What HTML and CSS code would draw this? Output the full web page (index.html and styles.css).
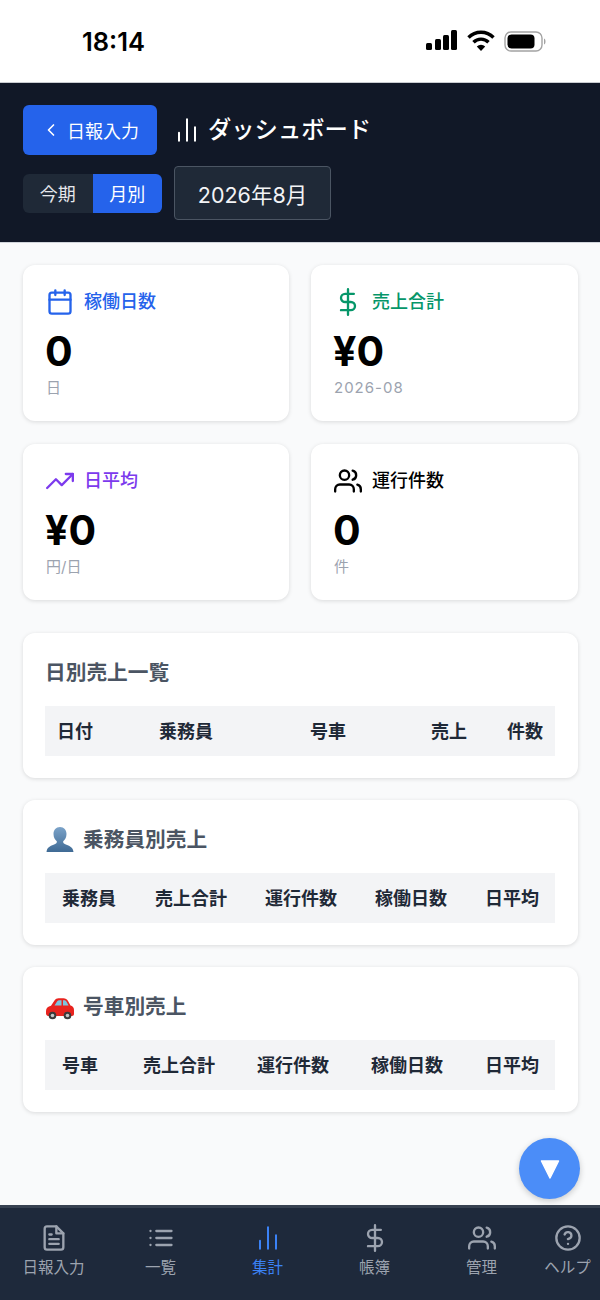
FILE: index.html
```html
<!DOCTYPE html>
<html lang="ja">
<head>
  <meta charset="UTF-8">
  <title>ダッシュボード</title>
  <link rel="stylesheet" href="styles.css">
</head>
<body>
  <div class="status-bar">
    <span class="clock">18:14</span>
    <div class="status-icons">
      <svg width="32" height="22" viewBox="0 0 32 22"><rect x="0" y="13" width="6" height="7" rx="1.5"/><rect x="9" y="9" width="6" height="11" rx="1.5"/><rect x="17" y="5" width="6" height="15" rx="1.5"/><rect x="25" y="0" width="6" height="20" rx="1.5"/></svg>
      <svg width="28" height="22" viewBox="0 0 28 22" fill="none" stroke="#000" stroke-width="3.4"><path d="M1.500 7.500a17.500 17.500 0 0 1 25 0"/><path d="M6.500 12.300a10.500 10.500 0 0 1 15 0"/><path d="M14 21l-4.200-4.600a6 6 0 0 1 8.400 0z" fill="#000" stroke="none"/></svg>
      <svg width="44" height="22" viewBox="0 0 44 22"><rect x="1" y="2" width="37" height="19" rx="6" fill="none" stroke="#a3a3a3" stroke-width="1.4"/><rect x="3.500" y="4.500" width="27" height="14" rx="4"/><path d="M40 8.500c2 .5 2 5.500 0 6z" fill="#a3a3a3"/></svg>
    </div>
  </div>

  <header class="top">
    <div class="top-row">
      <button class="back-btn">
        <svg class="ico" width="20" height="20" viewBox="0 0 24 24"><path d="M15 18l-6-6 6-6"/></svg>
        日報入力
      </button>
      <h1 class="page-title">
        <svg class="ico bars" width="32" height="32" viewBox="0 0 24 24"><path d="M18 20V10M12 20V4M6 20v-6"/></svg>
        ダッシュボード
      </h1>
    </div>
    <div class="filter-row">
      <div class="toggle">
        <span class="toggle-item">今期</span>
        <span class="toggle-item active">月別</span>
      </div>
      <div class="month-box">2026年8月</div>
    </div>
  </header>

  <main class="content">
    <section class="stats">
      <div class="stat">
        <div class="stat-head blue">
          <svg class="ico" width="28" height="28" viewBox="0 0 24 24"><rect x="3" y="4" width="18" height="18" rx="2"/><path d="M16 2v4M8 2v4M3 10h18"/></svg>
          稼働日数
        </div>
        <div class="stat-value">0</div>
        <div class="stat-sub">日</div>
      </div>
      <div class="stat">
        <div class="stat-head green">
          <svg class="ico" width="28" height="28" viewBox="0 0 24 24"><path d="M12 1v22M17 5H9.500a3.500 3.500 0 0 0 0 7h5a3.500 3.500 0 0 1 0 7H6"/></svg>
          売上合計
        </div>
        <div class="stat-value">¥0</div>
        <div class="stat-sub date-sub">2026-08</div>
      </div>
      <div class="stat">
        <div class="stat-head purple">
          <svg class="ico" width="28" height="28" viewBox="0 0 24 24"><path d="M23 6l-9.500 9.500-5-5L1 18"/><path d="M17 6h6v6"/></svg>
          日平均
        </div>
        <div class="stat-value">¥0</div>
        <div class="stat-sub">円/日</div>
      </div>
      <div class="stat">
        <div class="stat-head">
          <svg class="ico" width="28" height="28" viewBox="0 0 24 24"><path d="M17 21v-2a4 4 0 0 0-4-4H5a4 4 0 0 0-4 4v2"/><circle cx="9" cy="7" r="4"/><path d="M23 21v-2a4 4 0 0 0-3-3.870M16 3.130a4 4 0 0 1 0 7.750"/></svg>
          運行件数
        </div>
        <div class="stat-value">0</div>
        <div class="stat-sub">件</div>
      </div>
    </section>

    <section class="panel">
      <h2 class="panel-title">日別売上一覧</h2>
      <table class="daily">
        <colgroup><col class="w102"><col class="w151"><col class="w100"><col class="w81"><col class="w76"></colgroup>
        <tr><th>日付</th><th>乗務員</th><th>号車</th><th class="right">売上</th><th class="right">件数</th></tr>
      </table>
    </section>

    <section class="panel">
      <h2 class="panel-title">
        <svg width="30" height="30" viewBox="0 0 30 30">
          <defs><linearGradient id="bust" x1="0" y1="0" x2="0" y2="1"><stop offset="0" stop-color="#7ba3c9"/><stop offset="1" stop-color="#3f6a94"/></linearGradient></defs>
          <path fill="url(#bust)" d="M15 2c4 0 6.500 3 6.500 7 0 3.500-1.700 6-3.300 7.300-.4 1.700.6 2.500 3.300 3.500 3.500 1.300 6.500 2.700 7 7.200H1.500c.5-4.500 3.500-5.900 7-7.200 2.700-1 3.700-1.800 3.300-3.500C10.200 15 8.500 12.500 8.500 9c0-4 2.500-7 6.500-7z"/>
        </svg>
        乗務員別売上
      </h2>
      <table class="summary">
        <colgroup><col class="w93"><col class="w110"><col class="w110"><col class="w110"><col class="w87"></colgroup>
        <tr><th>乗務員</th><th>売上合計</th><th>運行件数</th><th>稼働日数</th><th>日平均</th></tr>
      </table>
    </section>

    <section class="panel">
      <h2 class="panel-title">
        <svg width="30" height="30" viewBox="0 0 30 30">
          <path fill="#e8231e" d="M1 19c0-3 2-4.500 5-5.200l3.500-5.300C10.500 7 12 6.300 13.500 6.300h5c2 0 3.500.9 4.400 2.400l2.600 4.800c2 .6 3.500 2 3.500 4.500v4c0 1.200-.8 2-2 2H2.800C1.700 23.500 1 22.800 1 21.500z"/>
          <path fill="#7cc4de" d="M9.500 13.500l2.700-4.300c.5-.7 1.200-1 2-1H16.500v5.300zM18 8.200h.8c1.200 0 2 .5 2.600 1.400l2.200 3.900H18z"/>
          <circle cx="7.500" cy="23.500" r="3.800" fill="#3a3a3a"/><circle cx="7.500" cy="23.500" r="1.800" fill="#c4c4c4"/>
          <circle cx="22.500" cy="23.500" r="3.800" fill="#3a3a3a"/><circle cx="22.500" cy="23.500" r="1.800" fill="#c4c4c4"/>
        </svg>
        号車別売上
      </h2>
      <table class="summary">
        <colgroup><col class="w81"><col class="w114"><col class="w114"><col class="w114"><col class="w87"></colgroup>
        <tr><th>号車</th><th>売上合計</th><th>運行件数</th><th>稼働日数</th><th>日平均</th></tr>
      </table>
    </section>
  </main>

  <button class="fab"><svg width="22" height="22" viewBox="0 0 22 22"><path d="M2.500 3h17L11 20z" fill="#fff" stroke="#fff" stroke-width="1.500" stroke-linejoin="round"/></svg></button>

  <nav class="bottom-nav">
    <a class="nav-item">
      <svg class="ico" width="28" height="28" viewBox="0 0 24 24"><path d="M14 2H6a2 2 0 0 0-2 2v16a2 2 0 0 0 2 2h12a2 2 0 0 0 2-2V8z"/><path d="M14 2v6h6M16 13H8M16 17H8M10 9H8"/></svg>
      日報入力
    </a>
    <a class="nav-item">
      <svg class="ico" width="28" height="28" viewBox="0 0 24 24"><path d="M8 6h13M8 12h13M8 18h13M3 6h.01M3 12h.01M3 18h.01"/></svg>
      一覧
    </a>
    <a class="nav-item active">
      <svg class="ico bars" width="32" height="32" viewBox="0 0 24 24"><path d="M18 20V10M12 20V4M6 20v-6"/></svg>
      集計
    </a>
    <a class="nav-item">
      <svg class="ico" width="28" height="28" viewBox="0 0 24 24"><path d="M12 1v22M17 5H9.500a3.500 3.500 0 0 0 0 7h5a3.500 3.500 0 0 1 0 7H6"/></svg>
      帳簿
    </a>
    <a class="nav-item">
      <svg class="ico" width="28" height="28" viewBox="0 0 24 24"><path d="M17 21v-2a4 4 0 0 0-4-4H5a4 4 0 0 0-4 4v2"/><circle cx="9" cy="7" r="4"/><path d="M23 21v-2a4 4 0 0 0-3-3.870M16 3.130a4 4 0 0 1 0 7.750"/></svg>
      管理
    </a>
    <a class="nav-item">
      <svg class="ico" width="28" height="28" viewBox="0 0 24 24"><circle cx="12" cy="12" r="10"/><path d="M9.090 9a3 3 0 0 1 5.830 1c0 2-3 3-3 3M12 17h.01"/></svg>
      ヘルプ
    </a>
  </nav>
</body>
</html>
```

FILE: styles.css
```css
* { box-sizing: border-box; }
html, body { margin: 0; height: 1300px; }
body { position: relative; display: flex; flex-direction: column; overflow: hidden; background: #f9fafb; color: #000; font-family: Inter, "Noto Sans CJK JP", sans-serif; }
.ico { fill: none; stroke: currentColor; stroke-width: 2; stroke-linecap: round; stroke-linejoin: round; flex: none; }
.ico.bars { stroke-width: 1.500; }

.status-bar { height: 82px; background: #fff; display: flex; justify-content: space-between; align-items: center; padding: 0 52px 0 82px; }
.clock { font-size: 25.500px; font-weight: 600; }
.status-icons { display: flex; align-items: center; gap: 9px; }

.top { height: 161px; background: #111827; border-top: 1px solid #c9ccd1; border-bottom: 1px solid #d1d5db; padding: 22px 23px; }
.top-row { display: flex; align-items: center; gap: 20px; }
.back-btn { width: 134px; height: 50px; display: flex; align-items: center; justify-content: center; gap: 6px; padding-right: 6px; background: #2563eb; color: #fff; border: none; border-radius: 6px; font: inherit; font-size: 18px; }
.page-title { margin: 0; display: flex; align-items: center; gap: 5px; padding-bottom: 4px; color: #fff; font-size: 23.300px; font-weight: 500; }
.page-title .bars { margin: 4px 0 0 -6px; }
.filter-row { display: flex; align-items: center; gap: 12px; margin-top: 11px; }
.toggle { display: flex; border-radius: 6px; overflow: hidden; }
.toggle-item { width: 69.500px; height: 39px; display: flex; align-items: center; justify-content: center; background: #1f2937; color: #e5e7eb; font-size: 18px; }
.toggle-item.active { background: #2563eb; color: #fff; }
.month-box { width: 157px; height: 54px; display: flex; align-items: center; justify-content: center; background: #1f2937; border: 1px solid #4b5563; border-radius: 4px; color: #f3f4f6; font-size: 21.500px; }

.content { flex: 1; padding: 22px 22px 0 23px; display: flex; flex-direction: column; gap: 22px; }
.stats { display: grid; grid-template-columns: 266px 267px; column-gap: 22px; row-gap: 23px; margin-bottom: 11px; }
.stat, .panel { background: #fff; border-radius: 12px; box-shadow: 0 1px 4px rgba(0,0,0,0.13); }
.stat { height: 156px; padding: 23px; }
.stat-head { display: flex; align-items: center; gap: 10px; padding-bottom: 4px; height: 28px; font-size: 18px; font-weight: 500; }
.stat-head svg { margin-top: 4px; }
.blue { color: #2563eb; }
.green { color: #059669; }
.purple { color: #7c3aed; }
.stat-value { margin: 10px 0 0 -1px; font-size: 41px; font-weight: 700; line-height: 50px; }
.stat-sub { font-size: 15px; line-height: 24px; color: #9ca3af; }
.date-sub { letter-spacing: 1px; }

.panel { padding: 23px 23px 22px 22px; }
.panel-title { margin: 0 0 16px; display: flex; align-items: center; gap: 8px; height: 34px; padding-bottom: 4px; font-size: 20.700px; font-weight: 600; color: #4b5563; }
.panel-title svg { margin-top: 4px; }
table { width: 100%; table-layout: fixed; border-collapse: collapse; background: #f3f4f6; }
th { height: 50px; padding: 0 12px 2px; font-size: 18px; font-weight: 600; color: #1f2937; text-align: left; white-space: nowrap; }
.summary th { padding: 0 0 2px 17px; }
.daily th.right { text-align: right; }
.w76 { width: 76px; }
.w81 { width: 81px; }
.w87 { width: 87px; }
.w93 { width: 93px; }
.w100 { width: 100px; }
.w102 { width: 102px; }
.w110 { width: 110px; }
.w114 { width: 114px; }
.w151 { width: 151px; }

.fab { position: absolute; left: 519px; top: 1138px; width: 61px; height: 61px; display: flex; align-items: center; justify-content: center; padding: 0; border: none; border-radius: 50%; background: #4b8df8; box-shadow: 0 2px 6px rgba(0,0,0,0.2); }

.bottom-nav { height: 95px; display: grid; grid-template-columns: repeat(5, 107px) 65px; background: #1e293b; border-top: 3px solid #374151; }
.nav-item { display: flex; flex-direction: column; align-items: center; padding-top: 16px; gap: 3px; color: #9ca3af; font-size: 15.500px; white-space: nowrap; }
.nav-item .bars { margin: -2px; }
.nav-item.active { color: #3b82f6; }
```
